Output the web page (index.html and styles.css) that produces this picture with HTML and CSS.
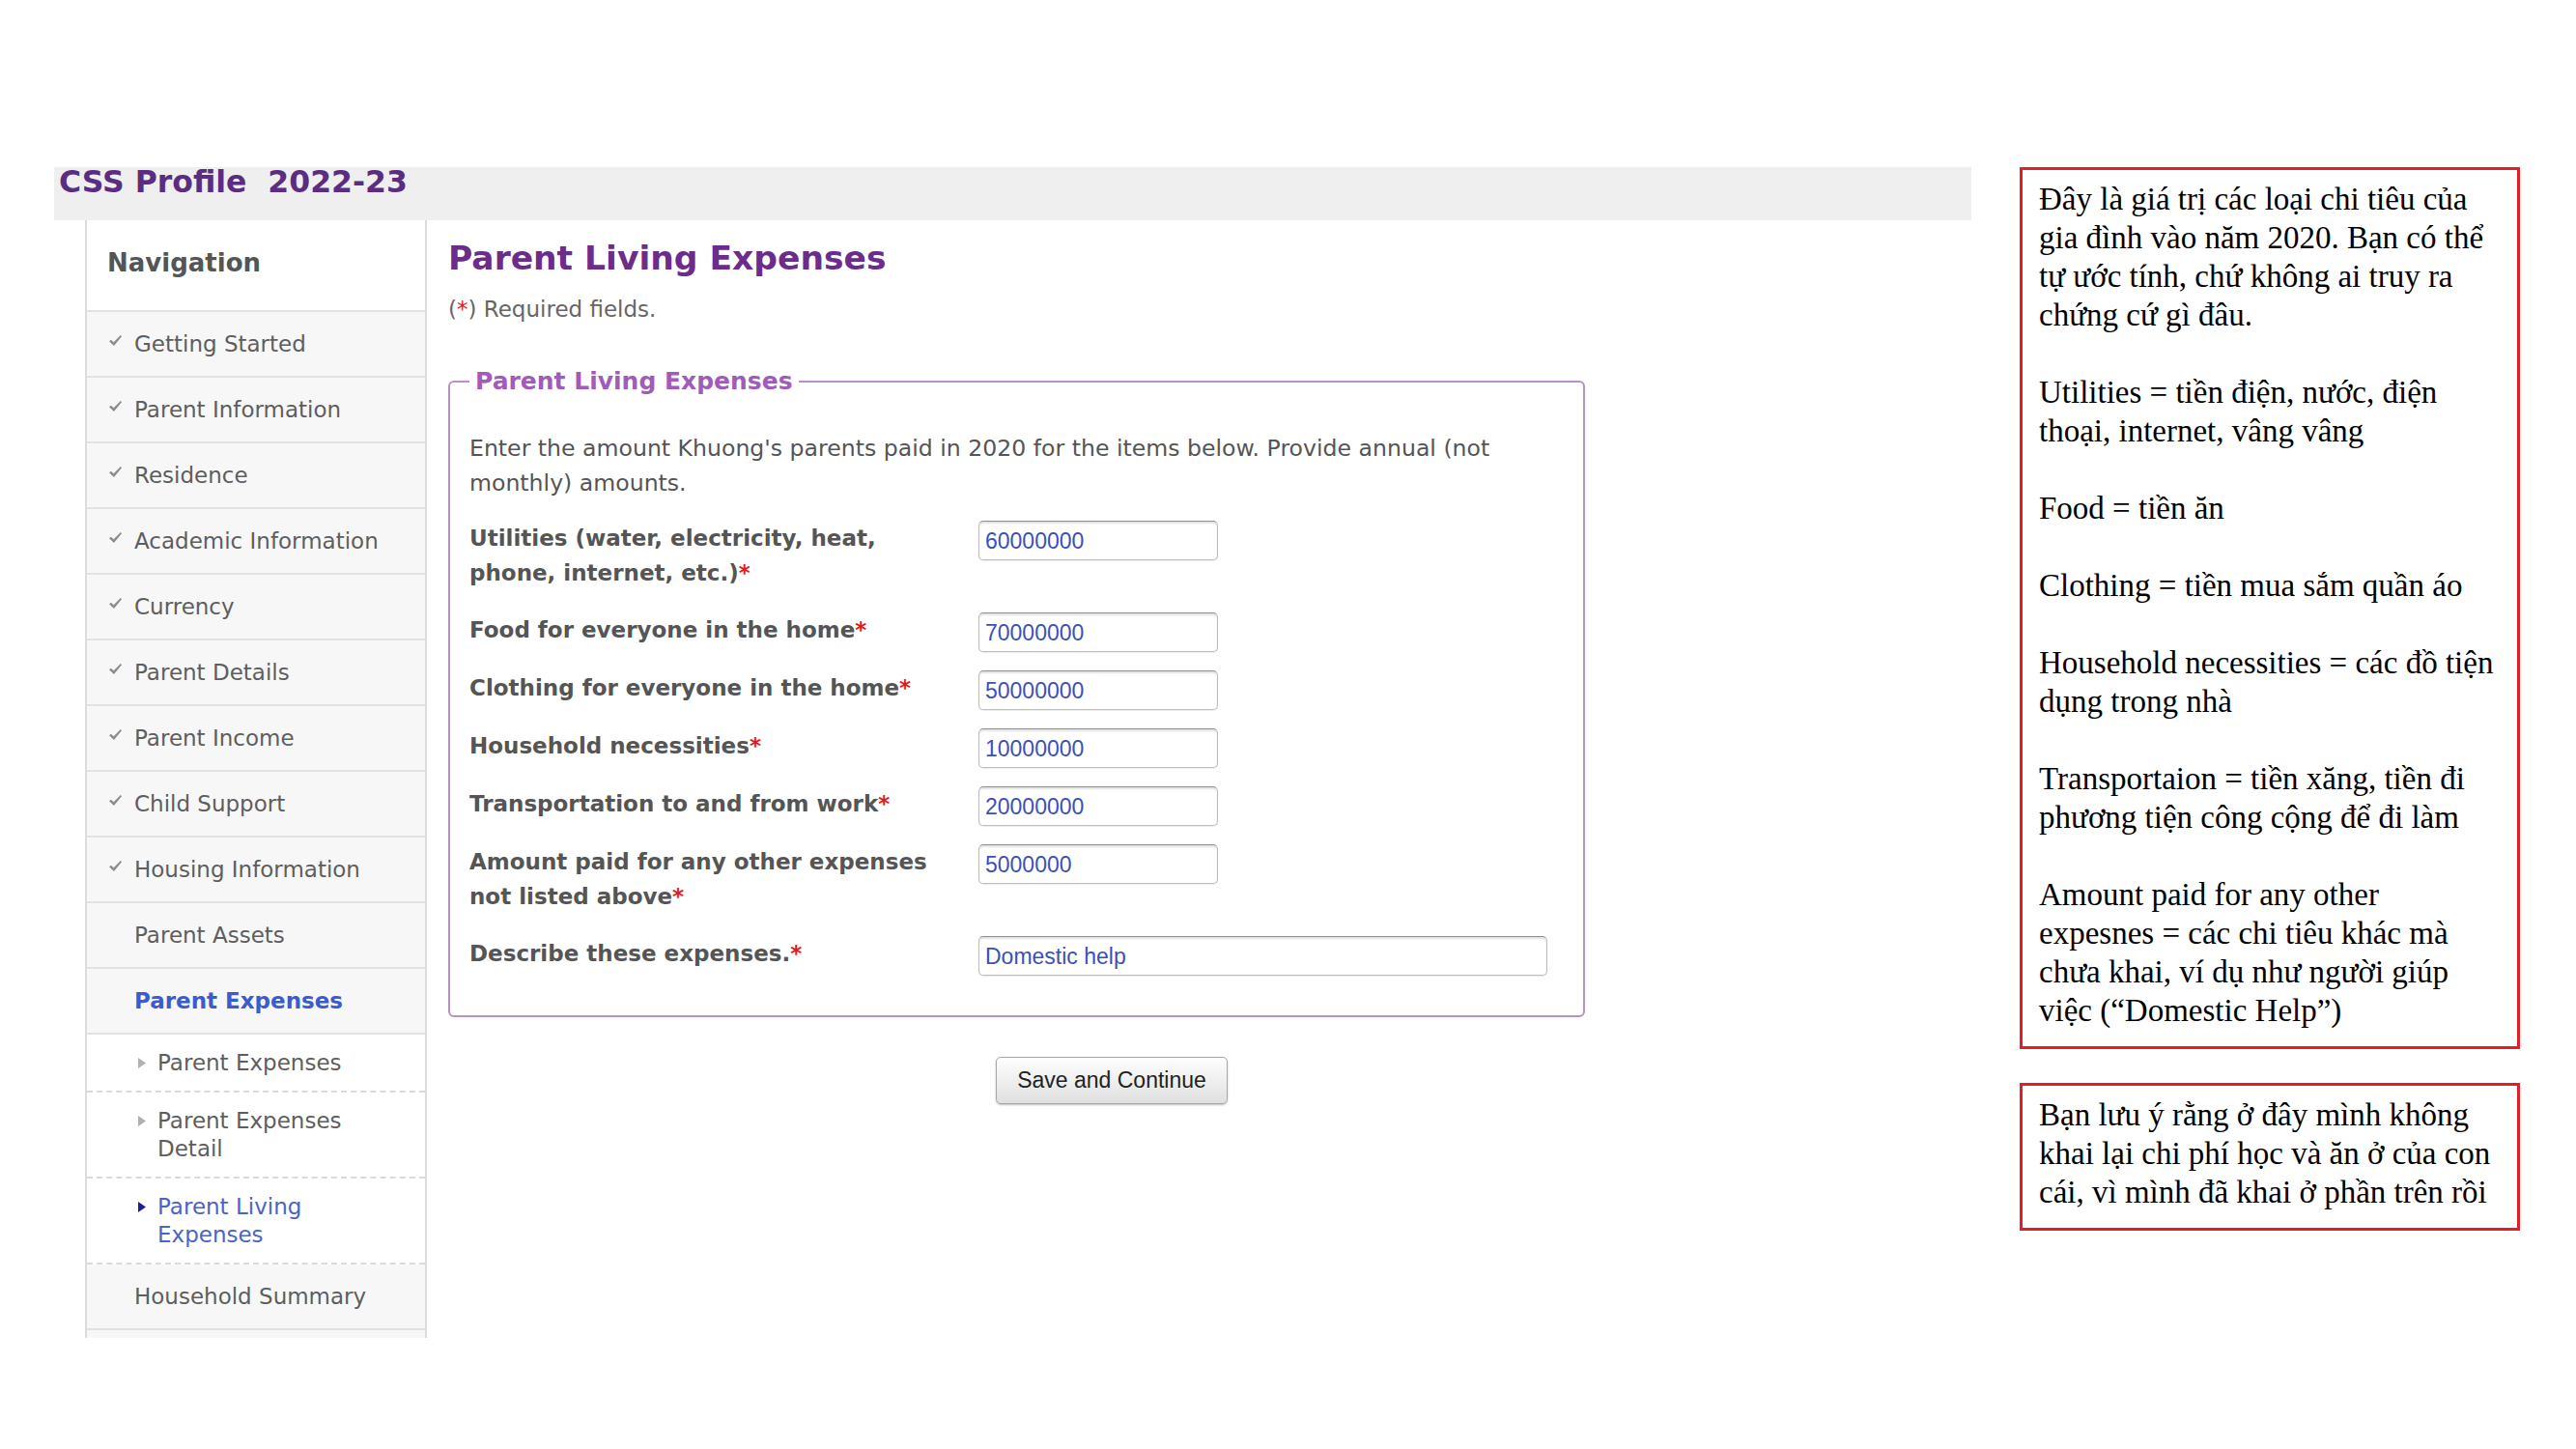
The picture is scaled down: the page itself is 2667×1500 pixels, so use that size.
FILE: index.html
```html
<!DOCTYPE html>
<html lang="en">
<head>
    <meta charset="UTF-8">
    <title>CSS Profile - Parent Living Expenses</title>
    <link rel="stylesheet" href="styles.css">
</head>
<body>
    <div class="slide">
        <div class="app">
            <div class="app-header">
                <h1 class="app-title">CSS Profile&nbsp; 2022-23</h1>
            </div>

            <div class="app-body">
                <div class="sidebar">
                    <div class="nav-header">Navigation</div>
                    <div class="nav-item done"><svg class="check" viewBox="0 0 12 10"><path d="M0 5.6 L1.8 4.2 L4.3 6.6 L10.9 0 L12 1 L4.6 10 Z"/></svg><span>Getting Started</span></div>
                    <div class="nav-item done"><svg class="check" viewBox="0 0 12 10"><path d="M0 5.6 L1.8 4.2 L4.3 6.6 L10.9 0 L12 1 L4.6 10 Z"/></svg><span>Parent Information</span></div>
                    <div class="nav-item done"><svg class="check" viewBox="0 0 12 10"><path d="M0 5.6 L1.8 4.2 L4.3 6.6 L10.9 0 L12 1 L4.6 10 Z"/></svg><span>Residence</span></div>
                    <div class="nav-item done"><svg class="check" viewBox="0 0 12 10"><path d="M0 5.6 L1.8 4.2 L4.3 6.6 L10.9 0 L12 1 L4.6 10 Z"/></svg><span>Academic Information</span></div>
                    <div class="nav-item done"><svg class="check" viewBox="0 0 12 10"><path d="M0 5.6 L1.8 4.2 L4.3 6.6 L10.9 0 L12 1 L4.6 10 Z"/></svg><span>Currency</span></div>
                    <div class="nav-item done"><svg class="check" viewBox="0 0 12 10"><path d="M0 5.6 L1.8 4.2 L4.3 6.6 L10.9 0 L12 1 L4.6 10 Z"/></svg><span>Parent Details</span></div>
                    <div class="nav-item done"><svg class="check" viewBox="0 0 12 10"><path d="M0 5.6 L1.8 4.2 L4.3 6.6 L10.9 0 L12 1 L4.6 10 Z"/></svg><span>Parent Income</span></div>
                    <div class="nav-item done"><svg class="check" viewBox="0 0 12 10"><path d="M0 5.6 L1.8 4.2 L4.3 6.6 L10.9 0 L12 1 L4.6 10 Z"/></svg><span>Child Support</span></div>
                    <div class="nav-item done"><svg class="check" viewBox="0 0 12 10"><path d="M0 5.6 L1.8 4.2 L4.3 6.6 L10.9 0 L12 1 L4.6 10 Z"/></svg><span>Housing Information</span></div>
                    <div class="nav-item"><span>Parent Assets</span></div>
                    <div class="nav-item active"><span>Parent Expenses</span></div>
                    <div class="nav-sub">
                        <span class="arrow"><svg viewBox="0 0 8 11"><polygon points="0,0 8,5.5 0,11"/></svg></span>
                        <span class="sub-text">Parent Expenses</span>
                    </div>
                    <div class="nav-sub">
                        <span class="arrow"><svg viewBox="0 0 8 11"><polygon points="0,0 8,5.5 0,11"/></svg></span>
                        <span class="sub-text">Parent Expenses Detail</span>
                    </div>
                    <div class="nav-sub current">
                        <span class="arrow"><svg viewBox="0 0 8 11"><polygon points="0,0 8,5.5 0,11"/></svg></span>
                        <span class="sub-text">Parent Living Expenses</span>
                    </div>
                    <div class="nav-item"><span>Household Summary</span></div>
                </div>

                <div class="main">
                    <h2 class="page-title">Parent Living Expenses</h2>
                    <p class="required-note">(<span class="req">*</span>) Required fields.</p>

                    <fieldset class="expense-set">
                        <legend>Parent Living Expenses</legend>
                        <p class="intro">Enter the amount Khuong's parents paid in 2020 for the items below. Provide annual (not monthly) amounts.</p>

                        <div class="field-row">
                            <label class="field-label">Utilities (water, electricity, heat, phone, internet, etc.)</label>
                            <input class="field-input" type="text" value="60000000">
                        </div>
                        <div class="field-row">
                            <label class="field-label">Food for everyone in the home</label>
                            <input class="field-input" type="text" value="70000000">
                        </div>
                        <div class="field-row">
                            <label class="field-label">Clothing for everyone in the home</label>
                            <input class="field-input" type="text" value="50000000">
                        </div>
                        <div class="field-row">
                            <label class="field-label">Household necessities</label>
                            <input class="field-input" type="text" value="10000000">
                        </div>
                        <div class="field-row">
                            <label class="field-label">Transportation to and from work</label>
                            <input class="field-input" type="text" value="20000000">
                        </div>
                        <div class="field-row">
                            <label class="field-label">Amount paid for any other expenses not listed above</label>
                            <input class="field-input" type="text" value="5000000">
                        </div>
                        <div class="field-row">
                            <label class="field-label">Describe these expenses.</label>
                            <input class="field-input wide" type="text" value="Domestic help">
                        </div>
                    </fieldset>

                    <div class="actions">
                        <button class="save-btn" type="button">Save and Continue</button>
                    </div>
                </div>
            </div>
        </div>

        <div class="notes">
            <div class="note">
                <p>Đây là giá trị các loại chi tiêu của<br>gia đình vào năm 2020. Bạn có thể<br>tự ước tính, chứ không ai truy ra<br>chứng cứ gì đâu.</p>
                <p>Utilities = tiền điện, nước, điện<br>thoại, internet, vâng vâng</p>
                <p>Food = tiền ăn</p>
                <p>Clothing = tiền mua sắm quần áo</p>
                <p>Household necessities = các đồ tiện<br>dụng trong nhà</p>
                <p>Transportaion = tiền xăng, tiền đi<br>phương tiện công cộng để đi làm</p>
                <p>Amount paid for any other<br>expesnes = các chi tiêu khác mà<br>chưa khai, ví dụ như người giúp<br>việc (“Domestic Help”)</p>
            </div>
            <div class="note">
                <p>Bạn lưu ý rằng ở đây mình không<br>khai lại chi phí học và ăn ở của con<br>cái, vì mình đã khai ở phần trên rồi</p>
            </div>
        </div>
    </div>
</body>
</html>
```

FILE: styles.css
```css
body {
    margin: 0;
    background: #fff;
    font-family: "DejaVu Sans", Verdana, sans-serif;
    color: #555;
}

.slide {
    display: flex;
    align-items: flex-start;
    gap: 50px;
    padding: 173px 0 0 56px;
}

.app {
    width: 1985px;
}

.app-header {
    height: 55px;
    background: #efefef;
    padding-left: 5px;
}

.app-title {
    margin: 0;
    font-size: 31.5px;
    line-height: 30px;
    font-weight: bold;
    color: #5b2d82;
}

.app-body {
    display: flex;
    align-items: flex-start;
}

/* left navigation */
.sidebar {
    width: 354px;
    margin-left: 32px;
    box-sizing: border-box;
    border-left: 2px solid #dcdcdc;
    border-right: 2px solid #dcdcdc;
    background: #f7f7f7;
    padding-bottom: 8px;
}

.nav-header {
    height: 95px;
    box-sizing: border-box;
    padding: 28px 0 0 21px;
    background: #fff;
    border-bottom: 2px solid #e2e2e2;
    font-size: 26px;
    line-height: 32px;
    font-weight: bold;
    color: #555;
}

.nav-item {
    height: 68px;
    box-sizing: border-box;
    display: flex;
    align-items: center;
    padding-left: 49px;
    border-bottom: 2px solid #e2e2e2;
    font-size: 23px;
    color: #5e5e5e;
}

.nav-item.done {
    padding-left: 23px;
}

.check {
    flex: none;
    width: 13px;
    height: 11px;
    margin-right: 13px;
    margin-top: -8px;
    fill: #8c8c8c;
}

.nav-item.active {
    font-weight: bold;
    color: #3b5ccc;
}

.nav-sub {
    display: flex;
    align-items: flex-start;
    padding: 15px 0 14px 53px;
    background: #fff;
    border-bottom: 2px dashed #dadada;
    font-size: 23px;
    line-height: 29px;
    color: #5e5e5e;
}

.arrow {
    flex: none;
    width: 20px;
    height: 29px;
    display: flex;
    align-items: center;
}

.arrow svg {
    width: 8px;
    height: 11px;
    fill: #b0b0b0;
}

.sub-text {
    width: 230px;
}

.nav-sub.current {
    color: #4a64c8;
}

.nav-sub.current .arrow svg {
    fill: #1c1ca0;
}

/* form area */
.main {
    width: 1374px;
    margin-left: 22px;
}

.page-title {
    margin: 19px 0 0;
    font-size: 34.5px;
    line-height: 40px;
    font-weight: bold;
    color: #6b2c8c;
}

.required-note {
    margin: 15px 0 0;
    font-size: 23px;
    line-height: 36px;
    color: #666;
}

.req {
    color: #e31a1c;
}

.expense-set {
    margin: 39px 0 0;
    width: 1177px;
    box-sizing: border-box;
    border: 2px solid #b690c9;
    border-radius: 6px;
    padding: 0 20px 41px;
}

.expense-set legend {
    padding: 0 6px;
    font-size: 25px;
    line-height: 36px;
    font-weight: bold;
    color: #a05cb9;
}

.intro {
    margin: 33px 0 17px;
    font-size: 23.6px;
    line-height: 36px;
    color: #555;
}

.field-row {
    display: flex;
    align-items: flex-start;
    margin-bottom: 15px;
}

.field-row:last-child {
    margin-bottom: 0;
}

.field-label {
    width: 527px;
    box-sizing: border-box;
    padding: 4px 22px 4px 0;
    font-size: 23px;
    line-height: 36px;
    font-weight: bold;
    color: #555;
}

.field-label::after {
    content: "*";
    color: #e31a1c;
}

.field-input {
    margin: 4px 0 0;
    width: 248px;
    height: 41px;
    box-sizing: border-box;
    padding: 2px 6px 0;
    border: 1px solid #bdbdbd;
    border-top-color: #8f8f8f;
    border-radius: 5px;
    box-shadow: inset 0 2px 2px rgba(0, 0, 0, 0.12), 0 1px 1px rgba(0, 0, 0, 0.08);
    font-family: "Liberation Sans", Arial, sans-serif;
    font-size: 23px;
    color: #3b50b8;
    background: #fff;
}

.field-input.wide {
    width: 589px;
}

.actions {
    margin-top: 41px;
    text-align: center;
}

.save-btn {
    width: 240px;
    height: 49px;
    border: 1px solid #a8a8a8;
    border-radius: 5px;
    background: linear-gradient(#fefefe, #e0e0e0);
    box-shadow: 0 1px 2px rgba(0, 0, 0, 0.25);
    font-family: "Liberation Sans", Arial, sans-serif;
    font-size: 23px;
    color: #222;
}

/* red annotation boxes */
.notes {
    width: 518px;
    display: flex;
    flex-direction: column;
    gap: 35px;
}

.note {
    border: 3px solid #e21f26;
    padding: 10px 6px 17px 17px;
    font-family: "Liberation Serif", "Times New Roman", serif;
    font-size: 33px;
    line-height: 40px;
    color: #000;
}

.note p {
    margin: 0 0 40px;
    white-space: nowrap;
}

.note p:last-child {
    margin-bottom: 0;
}
```
